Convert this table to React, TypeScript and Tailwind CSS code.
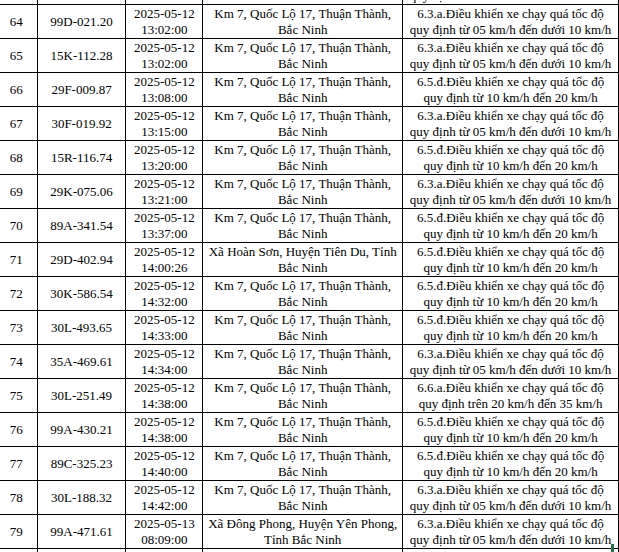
const KM7 = ["Km 7, Quốc Lộ 17, Thuận Thành,", "Bắc Ninh"];
const V63A = ["6.3.a.Điều khiển xe chạy quá tốc độ", "quy định từ 05 km/h đến dưới 10 km/h"];
const V65D = ["6.5.đ.Điều khiển xe chạy quá tốc độ", "quy định từ 10 km/h đến 20 km/h"];
const V66A = ["6.6.a.Điều khiển xe chạy quá tốc độ", "quy định trên 20 km/h đến 35 km/h"];

type Row = { no: string; plate: string; date: string; time: string; place: string[]; rule: string[] };

const ROWS: Row[] = [
  { no: "", plate: "", date: "2025-05-12", time: "13:01:00", place: KM7, rule: V63A },
  { no: "64", plate: "99D-021.20", date: "2025-05-12", time: "13:02:00", place: KM7, rule: V63A },
  { no: "65", plate: "15K-112.28", date: "2025-05-12", time: "13:02:00", place: KM7, rule: V63A },
  { no: "66", plate: "29F-009.87", date: "2025-05-12", time: "13:08:00", place: KM7, rule: V65D },
  { no: "67", plate: "30F-019.92", date: "2025-05-12", time: "13:15:00", place: KM7, rule: V63A },
  { no: "68", plate: "15R-116.74", date: "2025-05-12", time: "13:20:00", place: KM7, rule: V65D },
  { no: "69", plate: "29K-075.06", date: "2025-05-12", time: "13:21:00", place: KM7, rule: V63A },
  { no: "70", plate: "89A-341.54", date: "2025-05-12", time: "13:37:00", place: KM7, rule: V65D },
  { no: "71", plate: "29D-402.94", date: "2025-05-12", time: "14:00:26", place: ["Xã Hoàn Sơn, Huyện Tiên Du, Tỉnh", "Bắc Ninh"], rule: V65D },
  { no: "72", plate: "30K-586.54", date: "2025-05-12", time: "14:32:00", place: KM7, rule: V65D },
  { no: "73", plate: "30L-493.65", date: "2025-05-12", time: "14:33:00", place: KM7, rule: V65D },
  { no: "74", plate: "35A-469.61", date: "2025-05-12", time: "14:34:00", place: KM7, rule: V63A },
  { no: "75", plate: "30L-251.49", date: "2025-05-12", time: "14:38:00", place: KM7, rule: V66A },
  { no: "76", plate: "99A-430.21", date: "2025-05-12", time: "14:38:00", place: KM7, rule: V65D },
  { no: "77", plate: "89C-325.23", date: "2025-05-12", time: "14:40:00", place: KM7, rule: V65D },
  { no: "78", plate: "30L-188.32", date: "2025-05-12", time: "14:42:00", place: KM7, rule: V63A },
  { no: "79", plate: "99A-471.61", date: "2025-05-13", time: "08:09:00", place: ["Xã Đông Phong, Huyện Yên Phong,", "Tỉnh Bắc Ninh"], rule: V63A },
  { no: "80", plate: "30A-000.00", date: "2025-05-13", time: "08:12:00", place: KM7, rule: V63A },
];

function Lines({ lines }: { lines: string[] }) {
  return (
    <>
      {lines.map((l, i) => (
        <div key={i}>{l}</div>
      ))}
    </>
  );
}

export default function App() {
  return (
    <div className="relative w-[619px] h-[552px] overflow-hidden bg-white">
      <table
        className="table-fixed border-collapse ml-[-5px] mt-[-30px] text-[13px] leading-[16px] text-black whitespace-nowrap"
        style={{ fontFamily: '"Liberation Serif", "Times New Roman", serif' }}
      >
        <colgroup>
          <col className="w-[42px]" />
          <col className="w-[89px]" />
          <col className="w-[77px]" />
          <col className="w-[200px]" />
          <col className="w-[216px]" />
        </colgroup>
        <tbody>
          {ROWS.map((r, i) => (
            <tr key={i} className="h-[34px]">
              <td className="border border-black text-center p-0">{r.no}</td>
              <td className="border border-black text-center p-0">{r.plate}</td>
              <td className="border border-black text-center p-0">
                <div>{r.date}</div>
                <div>{r.time}</div>
              </td>
              <td className="border border-black text-center p-0">
                <Lines lines={r.place} />
              </td>
              <td className="border border-black text-center p-0">
                <Lines lines={r.rule} />
              </td>
            </tr>
          ))}
        </tbody>
      </table>
      {/* selection handle */}
      <div className="absolute left-[611px] top-[544px] w-[3px] h-[8px] bg-[#217346]" />
    </div>
  );
}
